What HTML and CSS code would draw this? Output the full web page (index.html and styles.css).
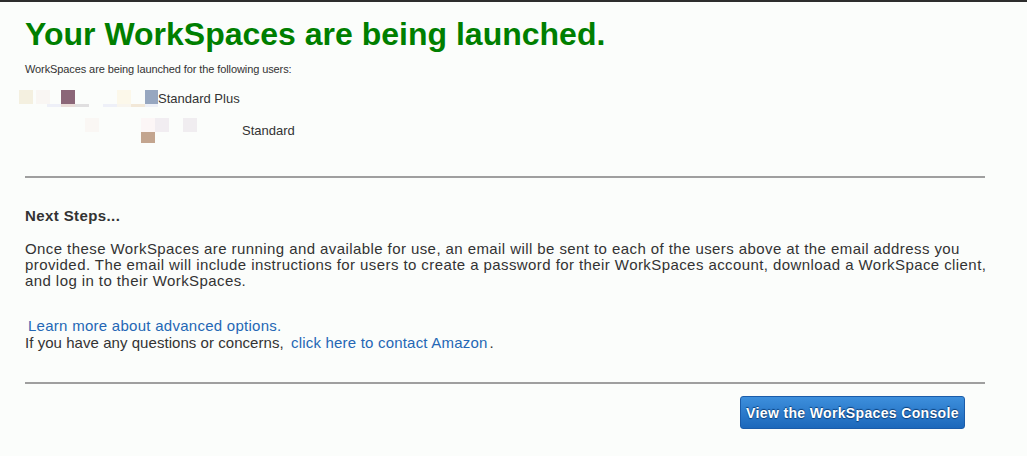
FILE: index.html
```html
<!DOCTYPE html>
<html>
<head>
<meta charset="utf-8">
<link rel="stylesheet" href="styles.css">
</head>
<body>
<div class="topbar"></div>
<main class="page">
  <h1 class="title">Your WorkSpaces are being launched.</h1>
  <p class="intro">WorkSpaces are being launched for the following users:</p>
  <div class="users">
    <div class="user user-one">
      <svg class="redact" width="139" height="17" viewBox="0 0 139 17">
        <rect x="0" y="0" width="14" height="14" fill="#f4f0e0"/>
        <rect x="17" y="0" width="14" height="14" fill="#f9f6f3"/>
        <rect x="28" y="14" width="14" height="3" fill="#eef0f8"/>
        <rect x="42" y="0" width="14" height="14" fill="#8b6678"/>
        <rect x="42" y="14" width="14" height="3" fill="#e9dcd8"/>
        <rect x="56" y="14" width="14" height="3" fill="#e0dfe0"/>
        <rect x="84" y="14" width="14" height="3" fill="#eef0f8"/>
        <rect x="98" y="0" width="14" height="14" fill="#fcf8ea"/>
        <rect x="98" y="14" width="14" height="3" fill="#f8f5ee"/>
        <rect x="112" y="14" width="14" height="3" fill="#f2e8d8"/>
        <rect x="126" y="0" width="13" height="14" fill="#97a7c0"/>
        <rect x="126" y="14" width="13" height="3" fill="#eef0f6"/>
      </svg>
      <span class="plan">Standard Plus</span>
    </div>
    <div class="user user-two">
      <svg class="redact" width="112" height="25" viewBox="0 0 112 25">
        <rect x="0" y="0" width="14" height="14" fill="#faf7f4"/>
        <rect x="56" y="0" width="14" height="14" fill="#fcf6f6"/>
        <rect x="70" y="0" width="14" height="14" fill="#f1edf1"/>
        <rect x="98" y="0" width="14" height="14" fill="#f0edf0"/>
        <rect x="56" y="14" width="14" height="11" fill="#c3a58f"/>
      </svg>
      <span class="plan">Standard</span>
    </div>
  </div>
  <hr class="rule">
  <h2 class="steps-title">Next Steps...</h2>
  <p class="steps">Once these WorkSpaces are running and available for use, an email will be sent to each of the users above at the email address you provided. The email will include instructions for users to create a password for their WorkSpaces account, download a WorkSpace client, and log in to their WorkSpaces.</p>
  <div class="links">
    <a class="link learn" href="#">Learn more about advanced options.</a>
    <p class="contact">If you have any questions or concerns, <a class="link contact-link" href="#">click here to contact Amazon</a>.</p>
  </div>
  <hr class="rule rule-bottom">
  <div class="actions">
    <button class="btn" type="button">View the WorkSpaces Console</button>
  </div>
</main>
</body>
</html>
```
FILE: styles.css
```css
html, body {
  margin: 0;
  padding: 0;
  background: #fbfdfb;
}
body {
  font-family: "Liberation Sans", Arial, sans-serif;
  color: #333333;
}
.topbar {
  height: 2px;
  background: #2d2d2d;
}
.page {
  padding: 0 42px 0 25px;
}
.title {
  margin: 14px 0 0;
  font-size: 32px;
  line-height: 37px;
  font-weight: bold;
  color: #007f00;
}
.intro {
  margin: 10px 0 0;
  font-size: 11px;
  line-height: 13px;
  letter-spacing: -0.1px;
}
.users {
  margin: 0 0 0 -6px;
  padding-top: 14px;
}
.user {
  display: flex;
  align-items: flex-start;
}
.redact {
  display: block;
  flex: none;
}
.plan {
  font-size: 13px;
  line-height: 15px;
  padding-top: 1px;
}
.user-two {
  margin-top: 11px;
  padding-left: 66px;
  gap: 45px;
}
.user-two .plan {
  padding-top: 5px;
}
.rule {
  margin: 33px 0 0;
  border: 0;
  height: 2px;
  background: #9f9f9f;
}
.steps-title {
  margin: 29px 0 0;
  font-size: 15px;
  line-height: 17px;
  font-weight: bold;
  letter-spacing: 0.4px;
}
.steps {
  margin: 17px -15px 0 0;
  font-size: 15px;
  line-height: 16px;
  letter-spacing: 0.42px;
}
.links {
  margin-top: 28px;
  font-size: 15px;
  line-height: 17px;
}
.link {
  color: #2467b5;
  text-decoration: none;
}
.learn {
  display: inline-block;
  margin-left: 3px;
  letter-spacing: 0.27px;
}
.contact {
  margin: 0;
  letter-spacing: 0.05px;
}
.contact-link {
  margin: 0 2px 0 3px;
  letter-spacing: 0.2px;
}
.rule-bottom {
  margin-top: 31px;
}
.actions {
  display: flex;
  justify-content: flex-end;
  padding: 12px 20px 0 0;
}
.btn {
  width: 225px;
  height: 33px;
  border: 1px solid #1b5ca9;
  border-radius: 3px;
  background: linear-gradient(#3d8fdc, #1c68bb);
  color: #ffffff;
  font-family: "Liberation Sans", Arial, sans-serif;
  font-size: 14px;
  font-weight: bold;
  letter-spacing: 0.35px;
  text-shadow: 0 1px 1px #0b3f7a, 0 -1px 1px #0b3f7a;
  padding: 0;
}
```
